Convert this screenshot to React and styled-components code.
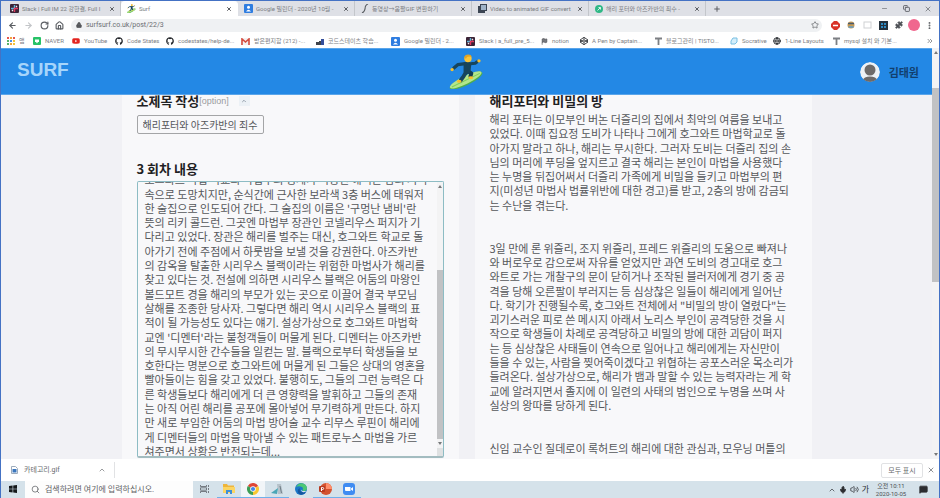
import React, { useLayoutEffect, useRef } from "react";
import styled, { createGlobalStyle, css } from "styled-components";
import {
  ArrowLeft, ArrowRight, RotateCw, House, Lock, Star, Puzzle, EllipsisVertical,
  X, Plus, Minus, Copy, ChevronUp, ChevronsRight, Search, Mic, Volume2,
  MessageSquareText, Globe, Flag,
} from "lucide-react";
import { FaGithub, FaYoutube, FaCodepen } from "react-icons/fa";

const ui = `Roboto, "Noto Sans CJK KR", sans-serif`;
const body = `"Noto Sans CJK KR", "Noto Sans", sans-serif`;

const GlobalStyle = createGlobalStyle`
  *, *::before, *::after { box-sizing: border-box; }
  html, body, #root { height: 100%; }
  body { margin: 0; overflow: hidden; font-family: ${body}; }
  button, input, textarea { font: inherit; color: inherit; margin: 0; padding: 0; border: 0; background: none; outline: none; }
  a { color: inherit; text-decoration: none; }
  h1, h2, p { margin: 0; }
  svg { display: block; flex: none; }
`;

const Window = styled.div`
  display: flex;
  flex-direction: column;
  height: 100vh;
  border: solid #4472c4;
  border-width: 1px 1px 0 1px;
  background: #fff;
`;

/* ---------- browser chrome ---------- */

const TabStrip = styled.div`
  display: flex;
  flex: none;
  height: 15px;
  padding-left: 3px;
  background: #dee0e6;
  font: 6px/15px ${ui};
  color: #7b7e83;
`;

const Tab = styled.div`
  display: flex;
  align-items: center;
  gap: 3px;
  flex: 0 1 117px;
  min-width: 0;
  padding: 0 4px 0 6px;
  border-right: 1px solid ${(p) => (p.$active ? "#fff" : "#c3c6cb")};
  background: ${(p) => (p.$active ? "#fff" : "transparent")};
  border-radius: ${(p) => (p.$active ? "4px 4px 0 0" : "0")};
`;

const TabTitle = styled.span`
  flex: 1;
  min-width: 0;
  overflow: hidden;
  white-space: nowrap;
`;

const IconButton = styled.button`
  display: grid;
  place-items: center;
  flex: none;
  width: ${(p) => p.$w || 8}px;
  color: ${(p) => p.$color || "#5a5d62"};
`;

const WindowButtons = styled.div`
  display: flex;
  margin-left: auto;
`;

const Toolbar = styled.div`
  display: flex;
  align-items: center;
  flex: none;
  height: 18px;
  padding: 0 2px 0 3px;
  background: #fff;
`;

const Omnibox = styled.label`
  display: flex;
  align-items: center;
  gap: 4px;
  flex: 1;
  height: 13px;
  margin: 0 5px 0 4px;
  padding: 0 3px 0 5px;
  border-radius: 7px;
  background: #eff1f3;
  color: #55585c;
`;

const Url = styled.input`
  flex: 1;
  min-width: 0;
  height: 13px;
  font: 7px/13px ${ui};
  color: #6b6e72;
`;

const Profile = styled.span`
  width: 12px;
  height: 12px;
  border-radius: 50%;
  background: #f0678e;
`;

const Bookmarks = styled.nav`
  display: flex;
  align-items: center;
  flex: none;
  height: 14px;
  padding: 0 2px 0 6px;
  font: 6px/14px ${ui};
  color: #7d8084;
`;

const Bookmark = styled.a`
  display: flex;
  align-items: center;
  gap: 4px;
  flex: 0 0 ${(p) => p.$w}px;
  white-space: nowrap;
`;

/* ---------- web page ---------- */

const Viewport = styled.div`
  display: flex;
  flex: 1;
  min-height: 0;
`;

const Page = styled.div`
  display: flex;
  flex-direction: column;
  flex: 1;
  min-width: 0;
  background: #f1f1f5;
`;

const Header = styled.header`
  display: grid;
  grid-template-columns: 1fr auto 1fr;
  align-items: center;
  flex: none;
  height: 47px;
  padding: 0 13px;
  background: #2388e5;
  border-top: 1px solid #5aa5ea;
  border-bottom: 1px solid #5aa5ea;
`;

const Brand = styled.a`
  font: bold 19px/40px "Liberation Sans", sans-serif;
  color: #a6d5fb;
  padding: 0 0 4px 3px;
`;

const User = styled.a`
  display: flex;
  align-items: center;
  justify-content: flex-end;
  gap: 9px;
  font: bold 11px/20px ${body};
  color: #123f6e;
`;

const Columns = styled.main`
  display: grid;
  grid-template-columns: 1fr 1fr;
  gap: 16px;
  flex: 1;
  min-height: 0;
  width: 100%;
  max-width: 690px;
  margin: 0 auto;
`;

const Panel = styled.section`
  display: flex;
  flex-direction: column;
  min-width: 0;
  min-height: 0;
  padding: 0 15px 1px;
  overflow: hidden;
  background: #f8f8fa;
`;

const Title = styled.h2`
  display: flex;
  align-items: ${(p) => (p.$first ? "flex-start" : "center")};
  flex: none;
  height: ${(p) => (p.$first ? "15px" : "20px")};
  margin-top: ${(p) => (p.$first ? "0" : "25px")};
  font: bold 13px/12px ${body};
  color: #1f2123;
`;

const Option = styled.span`
  font: 9px/12px "Liberation Sans", sans-serif;
  color: #9a9ca0;
`;

const Toggle = styled.button`
  display: grid;
  place-items: center;
  width: 11px;
  height: 10px;
  margin: 1px 0 0 10px;
  background: #ecf1f6;
  color: #7b8794;
`;

const SubtitleInput = styled.input`
  flex: none;
  width: 127px;
  height: 19px;
  margin-top: 5px;
  padding: 0 5px;
  border: 1px solid #a4a5a7;
  border-radius: 2px;
  font: 10px/17px ${body};
  color: #55575a;
`;

const Editor = styled.div`
  display: flex;
  flex: 1;
  min-height: 0;
  margin-top: 2px;
  border: 1px solid #8dbcc4;
  border-bottom: 2px solid #a3bcc0;
  border-radius: 2px;
`;

const prose = css`
  font: 11px/1.3 ${body};
  color: #55575a;
  white-space: pre;
`;

const EditorText = styled.textarea`
  flex: 1;
  min-width: 0;
  height: 100%;
  padding: 0 0 0 7px;
  resize: none;
  overflow: hidden auto;
  scrollbar-width: none;
  ${prose}
`;

const Story = styled.p`
  margin-top: 2px;
  ${prose}
`;

const ScrollTrack = styled.div`
  display: flex;
  flex-direction: column;
  flex: none;
  width: ${(p) => p.$w}px;
  background: #f3f3f4;
`;

const ScrollArrow = styled.span`
  align-self: center;
  margin: 3px 0;
  border: 2px solid transparent;
  border-top-width: ${(p) => (p.$down ? "3px" : "0")};
  border-bottom-width: ${(p) => (p.$down ? "0" : "3px")};
  border-top-color: #76787a;
  border-bottom-color: #76787a;
`;

const Space = styled.span`
  flex: ${(p) => p.$grow} 0 0;
`;

const Thumb = styled(Space)`
  background: #c1c2c4;
`;

const ResizeCorner = styled.span`
  height: 8px;
  background: #dfe1e2;
`;

/* ---------- download shelf and task bar ---------- */

const Shelf = styled.div`
  display: flex;
  align-items: center;
  flex: none;
  height: 22px;
  padding: 0 4px 0 10px;
  background: #fff;
  font: 7px/14px ${ui};
  color: #66696d;
`;

const Download = styled.button`
  display: flex;
  align-items: center;
  justify-content: space-between;
  gap: 6px;
  width: 104px;
  height: 16px;
  padding-right: 8px;
  border-right: 1px solid #e1e2e4;
`;

const FileName = styled.span`
  flex: 1;
  text-align: left;
`;

const ShowAll = styled.button`
  width: 42px;
  height: 15px;
  margin: 0 4px 0 auto;
  border: 1px solid #e1e2e4;
  border-radius: 2px;
`;

const TaskBar = styled.footer`
  display: flex;
  align-items: stretch;
  flex: none;
  height: 17px;
  background: #d5e2ea;
  font: 8px/17px ${ui};
  color: #2c2e31;
`;

const TaskButton = styled.button`
  display: grid;
  place-items: center;
  flex: none;
  width: 24px;
  background: ${(p) => (p.$active ? "#f1f5f8" : "transparent")};
  border-bottom: 1px solid ${(p) => (p.$open ? "#6fb0ea" : "transparent")};
`;

const SearchBox = styled.label`
  display: flex;
  align-items: center;
  gap: 5px;
  width: 168px;
  padding-left: 6px;
  background: #fdfdfd;
  color: #5f6266;
`;

const SearchInput = styled.input`
  flex: 1;
  min-width: 0;
  font: 8px/15px ${ui};
  &::placeholder { color: #5f6266; opacity: 1; }
`;

const Tray = styled.div`
  display: flex;
  align-items: center;
  gap: 3px;
  margin-left: auto;
  padding-right: 11px;
`;

const Clock = styled.time`
  width: 36px;
  margin: 0 7px 0 1px;
  text-align: center;
  font: 6px/8px ${ui};
  color: #4d5053;
`;

/* ---------- drawings ---------- */

const Surfer = ({ size }) => (
  <svg width={size} height={size} viewBox="0 0 36 36" aria-label="Surf">
    <g transform="rotate(-26 18 26)">
      <ellipse cx="17" cy="27" rx="18.500" ry="4.800" fill="#4fae4c" />
      <ellipse cx="17" cy="26.200" rx="18" ry="4.200" fill="#b4e68c" />
      <path d="M1 26.500h32" stroke="#7fce5a" strokeWidth="1" />
    </g>
    <path d="M18 18 L15 23 L12 27" stroke="#17455c" strokeWidth="4" strokeLinecap="round" strokeLinejoin="round" fill="none" />
    <path d="M20 18 L23 20 L22 23" stroke="#123c50" strokeWidth="4" strokeLinecap="round" strokeLinejoin="round" fill="none" />
    <path d="M15 9 q5-3 8 1 l-1 9 q-3 3-7 0z" fill="#17455c" />
    <path d="M17 10 L9 11 L5 14.500" stroke="#17455c" strokeWidth="3.400" strokeLinecap="round" strokeLinejoin="round" fill="none" />
    <path d="M22 10 L27 9.500 L29 8" stroke="#17455c" strokeWidth="3.200" strokeLinecap="round" strokeLinejoin="round" fill="none" />
    <circle cx="3.200" cy="16" r="1.700" fill="#f8bf2c" />
    <circle cx="30.800" cy="7" r="1.700" fill="#f8bf2c" />
    <ellipse cx="10.500" cy="28" rx="2.400" ry="1.600" fill="#f8bf2c" />
    <ellipse cx="22.500" cy="24.500" rx="2.400" ry="1.500" fill="#f8bf2c" />
    <circle cx="19.500" cy="4.700" r="3.800" fill="#fbc638" />
    <path d="M15.700 4.500 q0-4 4.200-4 q3 0 3.500 2.500 q-3-1-5 0 q0 2-2.700 1.500z" fill="#e0a326" />
  </svg>
);

const Avatar = () => (
  <svg width="20" height="20" viewBox="0 0 20 20">
    <clipPath id="face"><circle cx="10" cy="10" r="10" /></clipPath>
    <g clipPath="url(#face)">
      <circle cx="10" cy="10" r="10" fill="#eef1f4" />
      <circle cx="10" cy="8" r="5.500" fill="#6d6a69" />
      <ellipse cx="10" cy="18" rx="7" ry="3.500" fill="#6d6a69" />
    </g>
  </svg>
);

const SlackIcon = () => (
  <svg width="9" height="9" viewBox="0 0 9 9">
    <rect width="9" height="9" rx="1" fill="#3b2436" />
    <path d="M4.500 1v3.500H1" stroke="#5fb4d8" strokeWidth="1.400" fill="none" />
    <path d="M4.500 8V4.500H8" stroke="#e0395f" strokeWidth="1.400" fill="none" />
    <path d="M2 7l1-1M6 3l1-1" stroke="#f3e9ee" strokeWidth="1.300" />
  </svg>
);

const DocIcon = () => (
  <svg width="9" height="9" viewBox="0 0 9 9">
    <rect width="9" height="9" rx="1" fill="#2f7de0" />
    <circle cx="4.500" cy="3.200" r="1.500" fill="#fff" />
    <path d="M2 7.500q2.500-3.500 5 0z" fill="#fff" />
  </svg>
);

const GifIcon = () => (
  <svg width="9" height="9" viewBox="0 0 9 9">
    <rect y="2" width="7" height="7" fill="#3c4654" />
    <rect x="2" width="7" height="7" fill="#3c4654" />
    <rect x="3" y="1" width="5" height="5" fill="#9fb3c8" />
  </svg>
);

const BrushIcon = () => (
  <svg width="8" height="9" viewBox="0 0 8 9">
    <path d="M7 0Q4 1 4 5Q3.500 8 1 9" stroke="#5a5e63" strokeWidth="1.200" fill="none" />
  </svg>
);

const GreenDot = () => (
  <svg width="8" height="8" viewBox="0 0 8 8">
    <circle cx="4" cy="4" r="4" fill="#2fb886" />
    <path d="M2.500 5.500l3-3M3.500 2.500h2v2" stroke="#d8f5ea" fill="none" />
  </svg>
);

const AppsIcon = () => (
  <svg width="8" height="8" viewBox="0 0 8 8">
    {["#e8574a", "#f0a33c", "#e8574a", "#58b368", "#4a8fe8", "#f0c33c", "#58b368", "#f0a33c", "#f0c33c"].map((c, i) => (
      <rect key={i} x={(i % 3) * 3} y={Math.floor(i / 3) * 3} width="2" height="2" fill={c} />
    ))}
  </svg>
);

const NaverIcon = () => (
  <svg width="8" height="8" viewBox="0 0 8 8">
    <rect width="8" height="8" rx="1" fill="#27c267" />
    <rect x="2" y="2.500" width="4" height="2.500" fill="#fff" />
    <path d="M3 5h2l-1 1.500z" fill="#fff" />
  </svg>
);

const GmailIcon = () => (
  <svg width="9" height="7" viewBox="0 0 9 7">
    <rect width="9" height="7" fill="#f4f0f0" />
    <path d="M1 7V1l3.500 3L8 1v6" stroke="#d54c3f" strokeWidth="1.600" fill="none" />
  </svg>
);

const ChartIcon = () => (
  <svg width="8" height="8" viewBox="0 0 8 8">
    <path d="M0 8V5h3v3zM3 8V4h2v4z" fill="#40454c" />
    <path d="M5 8V2h3v6z" fill="#344f9b" />
  </svg>
);

const TistoryIcon = () => (
  <svg width="7" height="8" viewBox="0 0 7 8">
    <path d="M0 1.500h7M3.500 1v7" stroke="#7c7f83" strokeWidth="1.800" />
  </svg>
);

const SocrativeIcon = () => (
  <svg width="8" height="8" viewBox="0 0 8 8">
    <path d="M3 1h4v4L5 7H1V4z" fill="#d4eefb" stroke="#78bfe2" />
  </svg>
);

const BlockIcon = () => (
  <svg width="9" height="9" viewBox="0 0 9 9">
    <path d="M3 0h3l3 3v3L6 9H3L0 6V3z" fill="#d83328" />
    <path d="M2 4.500h5" stroke="#fff" strokeWidth="1.500" />
  </svg>
);

const BeeIcon = () => (
  <svg width="8" height="8" viewBox="0 0 8 8">
    <circle cx="4" cy="4" r="3.500" fill="#c99a52" />
    <path d="M1 2.500h6" stroke="#4b5b6a" strokeWidth="1.500" />
    <path d="M1.500 6h5" stroke="#5c9ed0" strokeWidth="1.500" />
  </svg>
);

const FrameIcon = () => (
  <svg width="9" height="8" viewBox="0 0 9 8">
    <rect x="1" y="1" width="7" height="6" fill="#fff" stroke="#cfd1d4" />
  </svg>
);

const ScreenIcon = () => (
  <svg width="9" height="9" viewBox="0 0 9 9">
    <rect width="9" height="9" fill="#26323d" />
    <rect x="2" y="2" width="5" height="5" fill="#2f8bc4" />
    <path d="M4.500 1v7M1 4.500h7" stroke="#26323d" />
  </svg>
);

const WindowsIcon = () => (
  <svg width="8" height="8" viewBox="0 0 8 8">
    <path d="M0 1l3.600-.5v3.200H0zM4.200.5L8 0v3.700H4.200zM0 4.300h3.600v3.200L0 7zM4.200 4.300H8V8l-3.800-.5z" fill="#15181b" />
  </svg>
);

const TaskViewIcon = () => (
  <svg width="10" height="8" viewBox="0 0 10 8">
    <path d="M.5 0v1.500h6V0M.5 8V6.500h6V8M.5 2.800h6v2.400h-6zM8.500 0v2M8.500 3v2M8.500 6v2" stroke="#5c6167" strokeWidth=".8" fill="none" />
  </svg>
);

const FolderIcon = () => (
  <svg width="12" height="10" viewBox="0 0 12 10">
    <path d="M0 0h4l1 1.500h6V9H0z" fill="#eeb53a" />
    <path d="M0 3h12v6H0z" fill="#fbd563" />
    <path d="M3 10V6h6v4H7V8H5v2z" fill="#3f8fd6" />
  </svg>
);

const ChromeIcon = () => (
  <svg width="12" height="12" viewBox="0 0 12 12">
    <path d="M6 6L.8 3A6 6 0 0 1 11.200 3z" fill="#df4635" />
    <path d="M6 6L11.200 3A6 6 0 0 1 6 12z" fill="#f8c832" />
    <path d="M6 6L6 12A6 6 0 0 1 .8 3z" fill="#3c9e56" />
    <circle cx="6" cy="6" r="2.800" fill="#fff" />
    <circle cx="6" cy="6" r="2.100" fill="#4285e8" />
  </svg>
);

const NotepadIcon = () => (
  <svg width="12" height="11" viewBox="0 0 12 11">
    <path d="M6 0h4l2 10H7z" fill="#b5c1c9" />
    <path d="M0 9l7-5-1 6z" fill="#4aa6b6" />
    <path d="M9 2l1.500 7" stroke="#6f7d86" />
  </svg>
);

const EdgeIcon = () => (
  <svg width="12" height="12" viewBox="0 0 12 12">
    <circle cx="6" cy="6" r="6" fill="#1b78c8" />
    <path d="M1 4Q3 0 7 .2Q12 1 12 6Q11 9 7.500 7.500Q9 4 5.500 3.500Q3 3 1 4z" fill="#4cc776" />
    <path d="M5 5Q3.500 9 9 9.500L11 9Q8 13 4 11Q1 7 5 5z" fill="#1557a0" />
    <path d="M6 6Q6 8 9 8L11.500 8Q10 9.500 7.500 9Q5.500 8 6 6z" fill="#d5e2ea" />
  </svg>
);

const SlidesIcon = () => (
  <svg width="13" height="12" viewBox="0 0 13 12">
    <circle cx="7" cy="6" r="6" fill="#d35230" />
    <path d="M7 0a6 6 0 0 1 6 6H7z" fill="#ff8f6b" />
    <rect y="3" width="6" height="6" rx="1" fill="#b7391f" />
    <path d="M2.500 8V4.500h1.200a1 1 0 0 1 0 2H2.500" stroke="#fff" fill="none" />
  </svg>
);

const ZoomIcon = () => (
  <svg width="12" height="12" viewBox="0 0 12 12">
    <rect width="12" height="12" rx="3" fill="#3f8cf2" />
    <path d="M2 4h5.500v4H3Q2 8 2 7zM8 5.500L10 4v4L8 6.500z" fill="#fff" />
  </svg>
);

const FileIcon = () => (
  <svg width="7" height="8" viewBox="0 0 7 8">
    <path d="M.5.500h4l2 2v5h-6z" fill="#fff" stroke="#9dacbd" />
    <rect x="1.500" y="3" width="4" height="3.500" fill="#3a76bd" />
  </svg>
);

/* ---------- data ---------- */

const tabs = [
  { title: "Slack | Full IM 22 강한결, Full I", icon: <SlackIcon /> },
  { title: "Surf", icon: <Surfer size={9} />, active: true },
  { title: "Google 밀린더 - 2020년 10월 -", icon: <DocIcon /> },
  { title: "동영상→움짤GIF 변환하기", icon: <BrushIcon /> },
  { title: "Video to animated GIF convert", icon: <GifIcon /> },
  { title: "해리 포터와 아즈카반의 죄수 -", icon: <GreenDot /> },
];

const bookmarks = [
  { w: 26, title: "앱", icon: <AppsIcon /> },
  { w: 39, title: "NAVER", icon: <NaverIcon /> },
  { w: 43, title: "YouTube", icon: <FaYoutube size={8} color="#e3241f" /> },
  { w: 51, title: "Code States", icon: <FaGithub size={8} color="#24272b" /> },
  { w: 75, title: "codestates/help-de...", icon: <FaGithub size={8} color="#24272b" /> },
  { w: 75, title: "받은편지함 (212) -...", icon: <GmailIcon /> },
  { w: 75, title: "코드스테이츠 학습...", icon: <ChartIcon /> },
  { w: 75, title: "Google 밀린더 - 2...", icon: <DocIcon /> },
  { w: 75, title: "Slack | a_full_pre_5...", icon: <SlackIcon /> },
  { w: 39, title: "notion", icon: <Flag size={7} color="#3f4246" fill="#77797d" /> },
  { w: 75, title: "A Pen by Captain...", icon: <FaCodepen size={8} color="#2b2e32" /> },
  { w: 75, title: "블로그관리 | TISTO...", icon: <TistoryIcon /> },
  { w: 43, title: "Socrative", icon: <SocrativeIcon /> },
  { w: 60, title: "1-Line Layouts", icon: <Globe size={8} color="#33373b" strokeWidth={3} /> },
  { w: 70, title: "mysql 설치 와 기본...", icon: <TistoryIcon /> },
];

const draft = `마법을 사용해 마지 아줌마를 부풀려 버린 해리는
호그와트 마법 학교와 마법부의 징계가 걱정된 해리는 밤의 거리
속으로 도망치지만, 순식간에 근사한 보라색 3층 버스에 태워저
한 술집으로 인도되어 간다. 그 술집의 이름은 '구멍난 냄비'란
뜻의 리키 콜드런. 그곳엔 마법부 장관인 코넬리우스 퍼지가 기
다리고 있었다. 장관은 해리를 벌주는 대신, 호그와트 학교로 돌
아가기 전에 주점에서 하룻밤을 보낼 것을 강권한다. 아즈카반
의 감옥을 탈출한 시리우스 블랙이라는 위험한 마법사가 해리를
찾고 있다는 것. 전설에 의하면 시리우스 블랙은 어둠의 마왕인
볼드모트 경을 해리의 부모가 있는 곳으로 이끌어 결국 부모님
살해를 조종한 당사자. 그렇다면 해리 역시 시리우스 블랙의 표
적이 될 가능성도 있다는 얘기. 설상가상으로 호그와트 마법학
교엔 '디멘터'라는 불청객들이 머물게 된다. 디멘터는 아즈카반
의 무시무시한 간수들을 일컫는 말. 블랙으로부터 학생들을 보
호한다는 명분으로 호그와트에 머물게 된 그들은 상대의 영혼을
빨아들이는 힘을 갖고 있었다. 불행히도, 그들의 그런 능력은 다
른 학생들보다 해리에게 더 큰 영향력을 발휘하고 그들의 존재
는 아직 어린 해리를 공포에 몰아넣어 무기력하게 만든다. 하지
만 새로 부임한 어둠의 마법 방어술 교수 리무스 루핀이 해리에
게 디멘터들의 마법을 막아낼 수 있는 패트로누스 마법을 가르
쳐주면서 상황은 반전되는데...`;

const story = `해리 포터는 이모부인 버논 더즐리의 집에서 최악의 여름을 보내고
있었다. 이때 집요정 도비가 나타나 그에게 호그와트 마법학교로 돌
아가지 말라고 하나, 해리는 무시한다. 그러자 도비는 더즐리 집의 손
님의 머리에 푸딩을 엎지르고 결국 해리는 본인이 마법을 사용했다
는 누명을 뒤집어써서 더즐리 가족에게 비밀을 들키고 마법부의 편
지(미성년 마법사 법률위반에 대한 경고)를 받고, 2층의 방에 감금되
는 수난을 겪는다.


3일 만에 론 위즐리, 조지 위즐리, 프레드 위즐리의 도움으로 빠져나
와 버로우로 감으로써 자유를 얻었지만 과연 도비의 경고대로 호그
와트로 가는 개찰구의 문이 닫히거나 조작된 블러저에게 경기 중 공
격을 당해 오른팔이 부러지는 등 심상찮은 일들이 해리에게 일어난
다. 학기가 진행될수록, 호그와트 전체에서 "비밀의 방이 열렸다"는
괴기스러운 피로 쓴 메시지 아래서 노리스 부인이 공격당한 것을 시
작으로 학생들이 차례로 공격당하고 비밀의 방에 대한 괴담이 퍼지
는 등 심상찮은 사태들이 연속으로 일어나고 해리에게는 자신만이
들을 수 있는, 사람을 찢어죽이겠다고 위협하는 공포스러운 목소리가
들려온다. 설상가상으로, 해리가 뱀과 말할 수 있는 능력자라는 게 학
교에 알려지면서 졸지에 이 일련의 사태의 범인으로 누명을 쓰며 사
실상의 왕따를 당하게 된다.


신임 교수인 질데로이 록허트의 해리에 대한 관심과, 모우닝 머틀의`;

/* ---------- sections ---------- */

function BrowserChrome() {
  return (
    <>
      <TabStrip>
        {tabs.map((t) => (
          <Tab key={t.title} $active={t.active}>
            {t.icon}
            <TabTitle>{t.title}</TabTitle>
            <IconButton aria-label="탭 닫기"><X size={6} strokeWidth={4} /></IconButton>
          </Tab>
        ))}
        <IconButton $w={22} aria-label="새 탭"><Plus size={8} strokeWidth={3} /></IconButton>
        <WindowButtons>
          <IconButton $w={22} aria-label="최소화"><Minus size={7} /></IconButton>
          <IconButton $w={22} aria-label="창 복원"><Copy size={7} strokeWidth={3} /></IconButton>
          <IconButton $w={22} aria-label="닫기"><X size={8} /></IconButton>
        </WindowButtons>
      </TabStrip>
      <Toolbar>
        <IconButton $w={16} aria-label="뒤로"><ArrowLeft size={9} strokeWidth={3} /></IconButton>
        <IconButton $w={16} $color="#c3c5c8" aria-label="앞으로"><ArrowRight size={9} strokeWidth={3} /></IconButton>
        <IconButton $w={16} aria-label="새로고침"><RotateCw size={9} strokeWidth={3} /></IconButton>
        <IconButton $w={15} aria-label="홈"><House size={9} strokeWidth={3} /></IconButton>
        <Omnibox>
          <Lock size={6} fill="#55585c" strokeWidth={3} />
          <Url aria-label="주소" defaultValue="surfsurf.co.uk/post/22/3" />
          <Star size={8} />
        </Omnibox>
        <IconButton $w={16} aria-label="차단"><BlockIcon /></IconButton>
        <IconButton $w={16} aria-label="쇼핑"><BeeIcon /></IconButton>
        <IconButton $w={16} aria-label="프레임"><FrameIcon /></IconButton>
        <IconButton $w={16} aria-label="화면"><ScreenIcon /></IconButton>
        <IconButton $w={15} aria-label="확장 프로그램"><Puzzle size={8} fill="#4c4f54" /></IconButton>
        <IconButton $w={16} aria-label="프로필"><Profile /></IconButton>
        <IconButton $w={15} aria-label="메뉴"><EllipsisVertical size={9} strokeWidth={3} /></IconButton>
      </Toolbar>
      <Bookmarks>
        {bookmarks.map((b) => (
          <Bookmark key={b.title} href="#" $w={b.w}>{b.icon}{b.title}</Bookmark>
        ))}
        <Space $grow={1} />
        <IconButton $w={15} aria-label="북마크 더보기"><ChevronsRight size={8} /></IconButton>
      </Bookmarks>
    </>
  );
}

function WritePanel() {
  const ref = useRef(null);
  useLayoutEffect(() => {
    const el = ref.current;
    el.scrollTop = el.scrollHeight - el.clientHeight - 3;
  }, []);
  return (
    <Panel>
      <Title $first as="label" htmlFor="subtitle">
        소제목 작성<Option>[option]</Option>
        <Toggle aria-label="접기"><ChevronUp size={6} strokeWidth={3} /></Toggle>
      </Title>
      <SubtitleInput id="subtitle" defaultValue="해리포터와 아즈카반의 죄수" />
      <Title as="label" htmlFor="content">3 회차 내용</Title>
      <Editor>
        <EditorText id="content" ref={ref} defaultValue={draft} spellCheck={false} />
        <ScrollTrack $w={6}>
          <ScrollArrow />
          <Space $grow={78} />
          <Thumb $grow={168} />
          <ScrollArrow $down />
          <ResizeCorner />
        </ScrollTrack>
      </Editor>
    </Panel>
  );
}

export default function App() {
  return (
    <>
      <GlobalStyle />
      <Window>
        <BrowserChrome />
        <Viewport>
          <Page>
            <Header>
              <Brand href="#">SURF</Brand>
              <Surfer size={35} />
              <User href="#"><Avatar />김태원</User>
            </Header>
            <Columns>
              <WritePanel />
              <Panel>
                <Title $first>해리포터와 비밀의 방</Title>
                <Story>{story}</Story>
              </Panel>
            </Columns>
          </Page>
          <ScrollTrack $w={7}>
            <ScrollArrow />
            <Space $grow={31} />
            <Thumb $grow={194} />
            <Space $grow={168} />
            <ScrollArrow $down />
          </ScrollTrack>
        </Viewport>
        <Shelf>
          <Download>
            <FileIcon />
            <FileName>카테고리.gif</FileName>
            <ChevronUp size={8} />
          </Download>
          <ShowAll>모두 표시</ShowAll>
          <IconButton aria-label="닫기"><X size={8} /></IconButton>
        </Shelf>
        <TaskBar>
          <TaskButton aria-label="시작"><WindowsIcon /></TaskButton>
          <SearchBox>
            <Search size={9} />
            <SearchInput aria-label="검색" placeholder="검색하려면 여기에 입력하십시오." />
          </SearchBox>
          <TaskButton aria-label="작업 보기"><TaskViewIcon /></TaskButton>
          <TaskButton $open aria-label="파일 탐색기"><FolderIcon /></TaskButton>
          <TaskButton $open $active aria-label="Chrome"><ChromeIcon /></TaskButton>
          <TaskButton $open aria-label="메모장"><NotepadIcon /></TaskButton>
          <TaskButton aria-label="Edge"><EdgeIcon /></TaskButton>
          <TaskButton $open aria-label="PowerPoint"><SlidesIcon /></TaskButton>
          <TaskButton $open aria-label="Zoom"><ZoomIcon /></TaskButton>
          <Tray>
            <ChevronUp size={8} />
            <Mic size={8} fill="#2c2e31" strokeWidth={3} />
            <Volume2 size={9} />
            <span>가</span>
            <Clock dateTime="2020-10-05T10:11">오전 10:11<br />2020-10-05</Clock>
            <MessageSquareText size={9} fill="#2c2e31" />
          </Tray>
        </TaskBar>
      </Window>
    </>
  );
}
